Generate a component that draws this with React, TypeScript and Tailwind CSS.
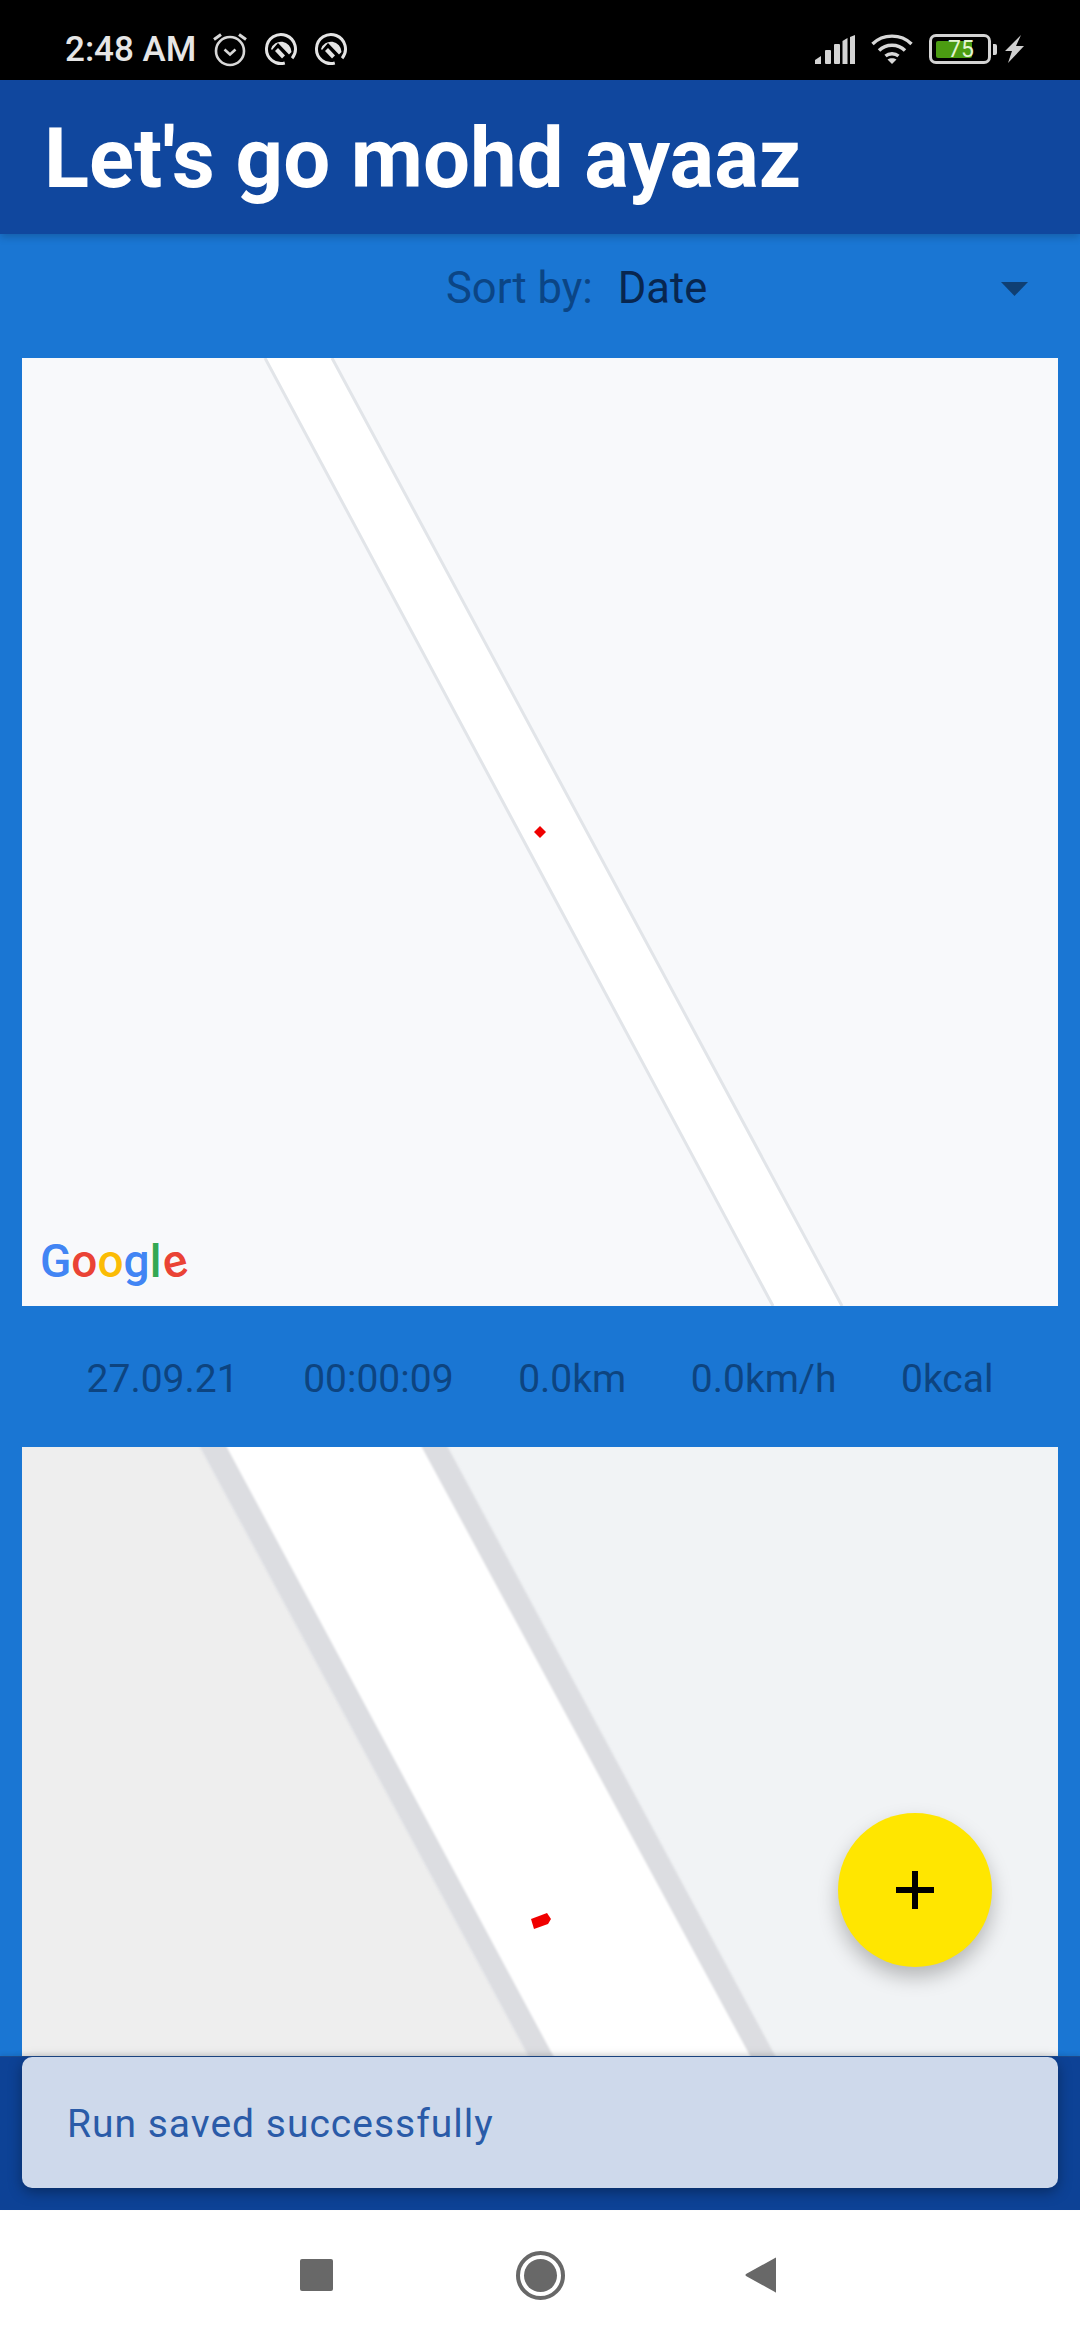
const stats = ["27.09.21", "00:00:09", "0.0km", "0.0km/h", "0kcal"];

function AlarmIcon() {
  return (
    <svg width="36" height="36" viewBox="0 0 36 36" fill="none" stroke="#d8d8d8" strokeWidth="2.6">
      <circle cx="18" cy="20" r="14" />
      <path d="M2 8.5 L9 3.5 M34 8.5 L27 3.5" strokeWidth="3" />
      <path d="M12.5 18.5 L18 23.5 L23.5 18.5" />
    </svg>
  );
}

function QIcon() {
  return (
    <svg width="34" height="34" viewBox="0 0 34 34" fill="none">
      <path d="M20.8 31 A14.5 14.5 0 1 1 28.1 26.3" stroke="#e4e4e4" strokeWidth="3" />
      <path d="M7 17 A10.5 10.5 0 0 1 27.5 20 L25 22.5 L14 11 L8 18 Z" fill="#e4e4e4" />
      <path d="M14 16 L21 23.5 L18 26.5 L11 19 Z" fill="#e4e4e4" />
    </svg>
  );
}

function SignalIcon() {
  return (
    <svg width="40" height="29" viewBox="0 0 40 29" fill="#d4d4d4">
      <path d="M0 29 V25 L6 21 V29 Z" />
      <rect x="10" y="15" width="6" height="14" rx="1" />
      <rect x="19" y="9" width="6" height="20" rx="1" />
      <path d="M27.5 6 L32.5 3 V29 H27.5 Z" />
      <path d="M35 2 L40 0 V29 H35 Z" />
    </svg>
  );
}

function WifiIcon() {
  return (
    <svg width="42" height="30" viewBox="0 0 42 30" fill="none" stroke="#d8d8d8" strokeWidth="3.4">
      <path d="M1.5 10 C12 -0.5 30 -0.5 40.5 10" />
      <path d="M8 16.5 C15 9.5 27 9.5 34 16.5" />
      <path d="M14.5 22 C18 19 24 19 27.5 22" />
      <path d="M21 30 L16.5 25.5 C19 23.8 23 23.8 25.5 25.5 Z" fill="#d8d8d8" stroke="none" />
    </svg>
  );
}

function BoltIcon() {
  return (
    <svg width="19" height="28" viewBox="0 0 19 28" fill="#d0d0d0">
      <path d="M16 0 L0 16 H7 L3 28 L19 11 H11 Z" />
    </svg>
  );
}

function StatusBar() {
  return (
    <div className="flex h-[80px] shrink-0 items-center bg-black pt-[18px] pl-[65px] pr-[56px]">
      <span className="text-[35px] leading-none font-medium text-[#e6e6e6]">2:48 AM</span>
      <div className="ml-[16px] flex items-center gap-[16px]">
        <AlarmIcon />
        <QIcon />
        <QIcon />
      </div>
      <div className="ml-auto flex items-center">
        <SignalIcon />
        <div className="ml-[16px]">
          <WifiIcon />
        </div>
        <div className="relative ml-[16px] flex h-[30px] w-[62px] items-center rounded-[7px] border-[3px] border-[#d4d4d4] px-[4px]">
          <div className="h-[17px] w-[36px] rounded-[2px] bg-[#4b9c12]" />
          <span className="absolute left-[16px] top-[1px] text-[23px] leading-[23px] text-[#e4f5d2]">75</span>
        </div>
        <div className="ml-[2px] h-[11px] w-[4px] rounded-r-[2px] bg-[#d4d4d4]" />
        <div className="ml-[8px]">
          <BoltIcon />
        </div>
      </div>
    </div>
  );
}

function GoogleLogo() {
  return (
    <div className="absolute bottom-[21px] left-[18px] flex h-[48px] items-center text-[46px] leading-none font-medium [text-shadow:0_0_3px_#fff]">
      <span className="text-[#4285f4]">G</span>
      <span className="text-[#ea4335]">o</span>
      <span className="text-[#fbbc05]">o</span>
      <span className="text-[#4285f4]">g</span>
      <span className="text-[#34a853]">l</span>
      <span className="ml-[1px] inline-block -rotate-[14deg] text-[#ea4335]">e</span>
    </div>
  );
}

function FirstMap() {
  return (
    <div className="relative mx-[22px] h-[948px] shrink-0 bg-[#f8f9fb]">
      <svg className="block h-full w-full" viewBox="0 0 1036 948">
        <polygon points="243,0 310,0 820,948 751,948" fill="#ffffff" />
        <path d="M243 0 L751 948 M310 0 L820 948" stroke="#e2e5e9" strokeWidth="3" />
        <path d="M518 468 L524 474 L518 480 L512 474 Z" fill="#f00000" />
      </svg>
      <GoogleLogo />
    </div>
  );
}

function SecondMap() {
  return (
    <div className="mx-[22px] h-[609px] shrink-0 overflow-hidden bg-[#f1f3f5]">
      <svg className="block h-full w-full" viewBox="0 0 1036 609">
        <polygon points="-50,-20 167,-20 517,629 -50,629" fill="#eeeeee" />
        <polygon className="blur-[1px]" points="167,-20 415,-20 764,629 517,629" fill="#dcdde1" />
        <polygon className="blur-[1px]" points="194,-20 389,-20 739,629 542,629" fill="#ffffff" />
        <path d="M509 472 L525 466 L529 472 L526 477 L512 482 Z" fill="#f00000" />
      </svg>
    </div>
  );
}

function NavBar() {
  return (
    <div className="relative flex h-[130px] shrink-0 items-center bg-white pl-[300px]">
      <div className="h-[32px] w-[33px] rounded-[2px] bg-[#686868]" />
      <div className="ml-[183px] flex h-[49px] w-[49px] items-center justify-center rounded-full border-[4px] border-[#686868]">
        <div className="h-[33px] w-[33px] rounded-full bg-[#686868]" />
      </div>
      <svg className="ml-[180px]" width="32" height="36" viewBox="0 0 32 36" fill="#686868">
        <path d="M31 1 V35 Q31 36 30 35 L1 19 Q0 18 1 17 L30 1 Q31 0 31 1 Z" />
      </svg>
    </div>
  );
}

export default function App() {
  return (
    <div
      className="relative flex h-[2340px] w-[1080px] flex-col overflow-hidden bg-[#1a76d3]"
      style={{ fontFamily: 'Roboto, sans-serif' }}
    >
      <StatusBar />

      <header className="z-10 flex h-[154px] shrink-0 items-center bg-[#10479e] pl-[44px] pt-[3px] shadow-[0_3px_8px_rgba(0,0,0,0.2)]">
        <h1 className="text-[83.3px] leading-none font-bold text-white">Let's go mohd ayaaz</h1>
      </header>

      {/* Sort by */}
      <div className="flex h-[124px] shrink-0 items-center pb-[14px] pl-[446px] pr-[52px] text-[43.5px]">
        <span className="text-[#0b4585]">Sort by:</span>
        <span className="ml-[25px] text-[#08264f]">Date</span>
        <svg className="ml-auto" width="27" height="14" viewBox="0 0 27 14" fill="#0f3f73">
          <path d="M0 0 H27 L13.5 14 Z" />
        </svg>
      </div>

      <FirstMap />

      <div className="mx-[22px] flex h-[141px] shrink-0 items-center justify-evenly pt-[6px] text-[39px] text-[#0d4480]">
        {stats.map((s) => (
          <span key={s}>{s}</span>
        ))}
      </div>

      <SecondMap />

      {/* Snackbar */}
      <div className="z-10 h-[154px] shrink-0 border-t border-[#1d4a8c] bg-[#0d4296] px-[22px] shadow-[0_-2px_4px_rgba(0,0,0,0.08)]">
        <div className="flex h-[131px] items-center rounded-[10px] bg-[#ced9eb] pl-[45px] pt-[3px] text-[39px] tracking-[1px] text-[#2a5ba8] shadow-[0_4px_14px_rgba(0,0,0,0.35)]">
          Run saved successfully
        </div>
      </div>

      <NavBar />

      {/* Add run button */}
      <button className="absolute left-[838px] top-[1813px] flex h-[154px] w-[154px] items-center justify-center rounded-full bg-[#ffe600] shadow-[0_10px_20px_rgba(0,0,0,0.25)]">
        <svg width="38" height="38" viewBox="0 0 38 38" fill="#000">
          <path d="M16 0 H22 V16 H38 V22 H22 V38 H16 V22 H0 V16 H16 Z" />
        </svg>
      </button>
    </div>
  );
}
